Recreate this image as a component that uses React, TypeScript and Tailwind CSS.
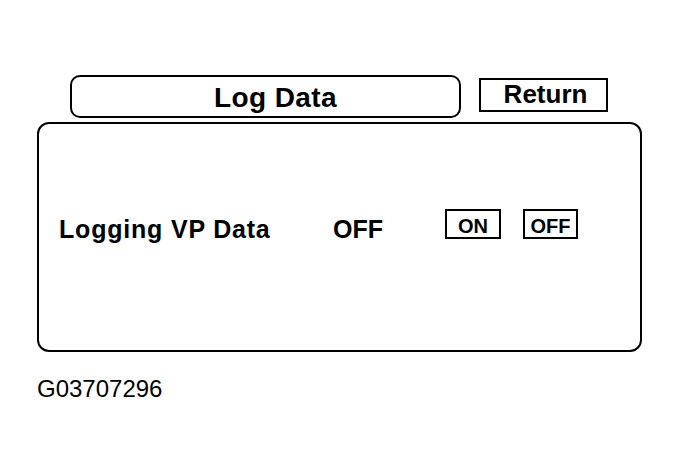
export default function App() {
    const font = { fontFamily: '"Liberation Sans", Arial, sans-serif' };

    return (
        <div className="w-[679px] h-[473px] bg-white text-black pt-[75px]" style={font}>
            <div className="flex items-start">
                <div className="ml-[70px] w-[391px] h-[43px] border-2 border-black rounded-[10px] flex justify-center pt-[7px] pl-[20px]">
                    <span className="text-[28px] leading-none font-bold tracking-[0.4px]">Log Data</span>
                </div>
                <div className="ml-[18px] mt-[3px] w-[129px] h-[34px] border-2 border-black flex justify-center pt-[1px] pl-[4px]">
                    <span className="text-[26px] leading-none font-bold">Return</span>
                </div>
            </div>

            <div className="ml-[37px] mt-[4px] w-[605px] h-[230px] border-2 border-black rounded-[12px] pt-[85px] pl-[20px]">
                <div className="flex items-start">
                    <div className="w-[274px] mt-[8px] text-[25px] leading-none font-bold tracking-[0.8px]">Logging VP Data</div>
                    <div className="w-[112px] mt-[8px] text-[25px] leading-none font-bold">OFF</div>
                    <div className="w-[56px] h-[30px] border-2 border-black flex justify-center pt-[5px]">
                        <span className="text-[20px] leading-none font-bold">ON</span>
                    </div>
                    <div className="ml-[22px] w-[55px] h-[30px] border-2 border-black flex justify-center pt-[5px]">
                        <span className="text-[20px] leading-none font-bold">OFF</span>
                    </div>
                </div>
            </div>

            <div className="ml-[37px] mt-[25px] text-[24px] leading-none">G03707296</div>
        </div>
    );
}
